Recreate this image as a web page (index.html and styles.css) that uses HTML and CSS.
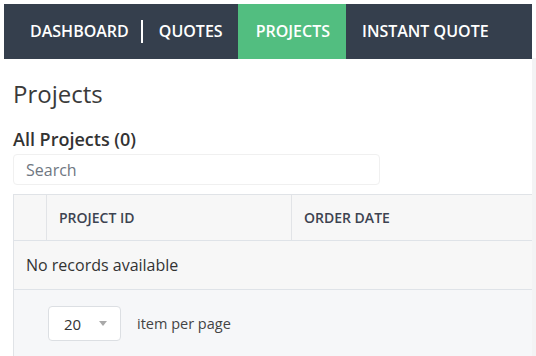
FILE: index.html
```html
<!DOCTYPE html>
<html lang="en">

<head>
  <meta charset="UTF-8">
  <meta name="viewport" content="width=device-width, initial-scale=1.0">
  <title>Projects</title>
  <link rel="stylesheet" href="styles.css">
</head>

<body>
  <div class="frame">
    <div class="main">
      <nav class="topnav">
        <a class="nav-link nav-link-split" href="#">Dashboard</a>
        <a class="nav-link" href="#">Quotes</a>
        <a class="nav-link active" href="#">Projects</a>
        <a class="nav-link" href="#">Instant Quote</a>
      </nav>

      <div class="content">
        <h1>Projects</h1>
        <h2>All Projects (0)</h2>
        <input class="search" type="text" placeholder="Search">

        <div class="grid">
          <div class="grid-header">
            <div class="cell cell-check"></div>
            <div class="cell cell-id">Project ID</div>
            <div class="cell cell-date">Order Date</div>
          </div>
          <div class="grid-empty">No records available</div>
          <div class="pager">
            <div class="page-size">
              <span>20</span>
              <span class="caret"></span>
            </div>
            <span class="pager-label">item per page</span>
          </div>
        </div>
      </div>
    </div>
    <div class="side-strip"></div>
  </div>
</body>

</html>
```

FILE: styles.css
```css
body {
  font-family: "Open Sans", Arial, sans-serif;
  margin: 0;
  background-color: #fff;
  color: #333;
}

.frame {
  display: grid;
  grid-template-columns: 532px 4px;
  height: 356px;
  overflow: hidden;
}

.main {
  padding: 4px 0 0 4px;
  overflow: hidden;
}

.side-strip {
  margin-top: 58px;
  background-color: #f3f3f4;
}

.topnav {
  display: flex;
  height: 55px;
  padding-left: 10px;
  background-color: #353f4d;
}

.nav-link {
  display: flex;
  align-items: center;
  padding: 0 15px 2px 16px;
  color: #fff;
  font-size: 16px;
  font-weight: 600;
  text-transform: uppercase;
  text-decoration: none;
  position: relative;
}

.nav-link-split {
  padding-right: 14px;
}

.nav-link-split::after {
  content: "";
  position: absolute;
  right: 0;
  top: 16px;
  width: 2px;
  height: 23px;
  background-color: #fff;
}

.nav-link.active {
  background-color: #52be80;
  padding: 0 16px 2px 18px;
}

.content {
  padding: 20px 0 0 9px;
}

h1 {
  margin: 0;
  font-size: 24px;
  font-weight: 400;
  line-height: 30px;
  color: #3a3a3a;
}

h2 {
  margin: 19px 0 0;
  font-size: 18px;
  font-weight: 600;
  line-height: 22px;
  color: #333;
}

.search {
  display: block;
  box-sizing: border-box;
  width: 367px;
  height: 31px;
  margin-top: 4px;
  padding: 0 12px;
  border: 1px solid #f0f0f0;
  border-radius: 4px;
  font-family: inherit;
  font-size: 16px;
  color: #333;
}

.search::placeholder {
  color: #6f7782;
}

.grid {
  margin-top: 9px;
  width: 540px;
  border: 1px solid #e0e3e7;
  border-right: none;
  background-color: #f7f7f7;
}

.grid-header {
  display: grid;
  grid-template-columns: 33px 245px 1fr;
  height: 45px;
  border-bottom: 1px solid #dfe3e8;
}

.cell {
  display: flex;
  align-items: center;
  padding-left: 12px;
  font-size: 14px;
  font-weight: 600;
  text-transform: uppercase;
  color: #3d4351;
}

.cell-check,
.cell-id {
  border-right: 1px solid #e2e4e7;
}

.grid-empty {
  padding: 13px 12px;
  font-size: 16px;
  line-height: 22px;
  color: #333;
  border-bottom: 1px solid #dfe3e8;
}

.pager {
  display: flex;
  align-items: center;
  gap: 16px;
  padding: 16px 0 20px 34px;
  background-color: #f6f7f9;
}

.page-size {
  display: flex;
  align-items: center;
  justify-content: space-between;
  box-sizing: border-box;
  width: 73px;
  height: 35px;
  padding: 0 13px 0 15px;
  background-color: #fff;
  border: 1px solid #dcdfe3;
  border-radius: 4px;
  font-size: 15px;
  color: #333;
}

.caret {
  width: 0;
  height: 0;
  border-left: 4px solid transparent;
  border-right: 4px solid transparent;
  border-top: 5px solid #a9a9a9;
}

.pager-label {
  font-size: 14.5px;
  color: #444;
}
```
